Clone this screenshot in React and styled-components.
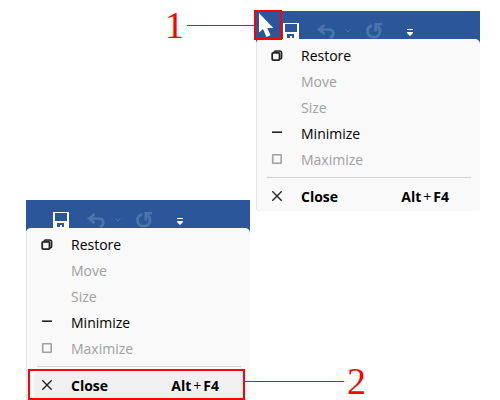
import React from "react";
import styled, { createGlobalStyle } from "styled-components";

const GlobalStyle = createGlobalStyle`
  *, *::before, *::after { box-sizing: border-box; }
  body { margin: 0; background: #fff; overflow: hidden; }
`;

const Figure = styled.main`
  display: grid;
  grid-template-columns: 1fr 1fr;
  align-items: start;
  gap: 6px;
  padding: 11px 20px 0 26px;
  font-family: "Open Sans", "Noto Sans", sans-serif;
`;

const Panel = styled.section`
  position: relative;
  margin-top: ${(p) => (p.$lowered ? "189px" : "0")};
`;

const Toolbar = styled.div`
  display: flex;
  align-items: flex-end;
  height: 34px;
  padding: 0 0 6px 27px;
  background: #2b579a;
`;

const ToolButton = styled.button`
  display: flex;
  align-items: flex-end;
  margin: 0 0 0 ${(p) => p.$gap || 0}px;
  padding: 0;
  border: 0;
  background: none;
  color: ${(p) => (p.$dim ? "#4c74ae" : "#fff")};
  svg { display: block; }
`;

const Menu = styled.div`
  position: relative;
  display: flex;
  flex-direction: column;
  margin-top: -6px;
  padding-top: 4px;
  background: #f9f9f9;
  border-radius: 5px 5px 3px 3px;
  box-shadow: inset 1px 0 #e4e4e4;
`;

const MenuItem = styled.button`
  display: grid;
  grid-template-columns: 20px 1fr auto;
  column-gap: 6px;
  align-items: center;
  height: ${(p) => (p.$strong ? "28px" : "26px")};
  margin: 0 6px 0 8px;
  padding: 0 25px 0 3px;
  border: 0;
  border-radius: 4px;
  background: ${(p) => (p.$highlight ? "#f0f0f0" : "none")};
  color: #000;
  font: ${(p) => (p.$strong ? 700 : 400)} 14px/20px "Open Sans", "Noto Sans", sans-serif;
  text-align: left;
  &:disabled { color: #a0a0a0; }
`;

const IconSlot = styled.span`
  display: flex;
  justify-content: center;
  color: ${(p) => (p.$dim ? "#a0a0a0" : "#222")};
`;

const Label = styled.span`
  padding-left: 8px;
`;

const Shortcut = styled.span`
  display: flex;
  gap: 2px;
`;

const Plus = styled.span`
  font-weight: 400;
`;

const Separator = styled.hr`
  height: 1px;
  margin: 4px 9px 5px 11px;
  border: 0;
  background: #d2d2d2;
`;

const ButtonOutline = styled.div`
  position: absolute;
  z-index: 1;
  top: -1px;
  left: -2px;
  width: 28px;
  height: 30px;
  border: 2px solid #f00;
`;

const RowOutline = styled.div`
  position: absolute;
  z-index: 1;
  right: 5px;
  bottom: 0;
  left: 2px;
  height: 31px;
  border: 2px solid #f00;
`;

const Callout = styled.div`
  position: absolute;
  z-index: 1;
  display: flex;
  align-items: center;
  gap: 3px;
  color: #f00;
  font: 38px/38px "Liberation Serif", serif;
`;

const StepOne = styled(Callout)`
  top: -5px;
  right: calc(100% + 2px);
`;

const StepTwo = styled(Callout)`
  bottom: 0;
  left: calc(100% - 5px);
`;

const Leader = styled.span`
  width: ${(p) => p.$length}px;
  height: 1px;
  background: #f00;
`;

const CursorIcon = () => (
  <svg width="24" height="26" viewBox="0 0 24 26" aria-hidden="true">
    <path d="M3 1V20.5L7 17L10.5 25L14.5 23.3L11.3 16H17.3Z" fill="#fff" />
  </svg>
);

const SaveIcon = () => (
  <svg width="16" height="16" viewBox="0 0 16 16" aria-hidden="true">
    <path fillRule="evenodd" d="M0 0H16V16H0ZM2 1V9H14V1ZM4 11V15H7V13H9V15H11V11Z" fill="#fff" />
  </svg>
);

const UndoIcon = () => (
  <svg width="18" height="15" viewBox="0 0 18 15" fill="none" stroke="currentColor" strokeWidth="2.6" aria-hidden="true">
    <path d="M7.5 1L2 5.5L7.5 10M2 5.5H11C17.5 5.5 18 11 13 14.2" />
  </svg>
);

const ChevronIcon = () => (
  <svg width="6" height="12" viewBox="0 0 6 12" fill="none" stroke="currentColor" aria-hidden="true">
    <path d="M.5 2.5L3 5L5.5 2.5" />
  </svg>
);

const RedoIcon = () => (
  <svg width="17" height="16" viewBox="0 0 17 16" aria-hidden="true">
    <path d="M6 2.3C3 3.2 1.5 5.4 1.5 8.2C1.5 11.8 4.2 14.2 7.8 14.2C11.5 14.2 14 11.7 14 8.2C14 6 13 4.3 11.5 3.2" fill="none" stroke="currentColor" strokeWidth="2.8" />
    <path d="M8.5 0H16V2.5H11V8.5H8.5Z" fill="currentColor" />
  </svg>
);

const CustomizeIcon = () => (
  <svg width="6" height="10" viewBox="0 0 6 10" fill="currentColor" aria-hidden="true">
    <path d="M0 0H6V1H0ZM0 3H6V4L3 7L0 4Z" />
  </svg>
);

const itemIcons = {
  Restore: (
    <svg width="12" height="12" viewBox="0 0 12 12" fill="none" stroke="currentColor" strokeWidth="1.4" aria-hidden="true">
      <path d="M3 2.5C3 1.5 3.5 1 4.5 1H8.5C10 1 10.7 1.8 10.7 3V7C10.7 8.2 10 9 9 9" fill="#bbb" />
      <rect x="1.2" y="2.8" width="7.3" height="7.3" rx="1" fill="#f9f9f9" strokeWidth="1.8" />
    </svg>
  ),
  Minimize: (
    <svg width="12" height="12" viewBox="0 0 12 12" aria-hidden="true">
      <path d="M1 4.2H11" stroke="currentColor" strokeWidth="1.6" />
    </svg>
  ),
  Maximize: (
    <svg width="12" height="12" viewBox="0 0 12 12" aria-hidden="true">
      <rect x="1.7" y=".8" width="8.5" height="8.5" rx=".5" fill="none" stroke="currentColor" strokeWidth="1.6" />
    </svg>
  ),
  Close: (
    <svg width="12" height="12" viewBox="0 0 12 12" aria-hidden="true">
      <path d="M1.3 .3L10.7 9.7M10.7 .3L1.3 9.7" stroke="currentColor" strokeWidth="1.4" />
    </svg>
  ),
};

const items = [
  { name: "Restore" },
  { name: "Move", disabled: true },
  { name: "Size", disabled: true },
  { name: "Minimize" },
  { name: "Maximize", disabled: true },
];

function WindowMenu({ lowered, children }) {
  return (
    <Panel $lowered={lowered}>
      <Toolbar>
        <ToolButton aria-label="Save"><SaveIcon /></ToolButton>
        <ToolButton $dim $gap={18} aria-label="Undo"><UndoIcon /></ToolButton>
        <ToolButton $dim $gap={10} aria-label="Undo history"><ChevronIcon /></ToolButton>
        <ToolButton $dim $gap={15} aria-label="Redo"><RedoIcon /></ToolButton>
        <ToolButton $gap={24} aria-label="Customize toolbar"><CustomizeIcon /></ToolButton>
      </Toolbar>
      <Menu role="menu">
        {items.map(({ name, disabled }) => (
          <MenuItem key={name} role="menuitem" disabled={disabled}>
            <IconSlot $dim={disabled}>{itemIcons[name]}</IconSlot>
            <Label>{name}</Label>
          </MenuItem>
        ))}
        <Separator />
        <MenuItem role="menuitem" $strong $highlight={lowered}>
          <IconSlot>{itemIcons.Close}</IconSlot>
          <Label>Close</Label>
          <Shortcut>
            <span>Alt</span>
            <Plus>+</Plus>
            <span>F4</span>
          </Shortcut>
        </MenuItem>
      </Menu>
      {children}
    </Panel>
  );
}

export default function App() {
  return (
    <>
      <GlobalStyle />
      <Figure>
        <WindowMenu lowered>
          <RowOutline />
          <StepTwo>
            <Leader $length={99} />
            <span>2</span>
          </StepTwo>
        </WindowMenu>
        <WindowMenu>
          <ButtonOutline><CursorIcon /></ButtonOutline>
          <StepOne>
            <span>1</span>
            <Leader $length={67} />
          </StepOne>
        </WindowMenu>
      </Figure>
    </>
  );
}
